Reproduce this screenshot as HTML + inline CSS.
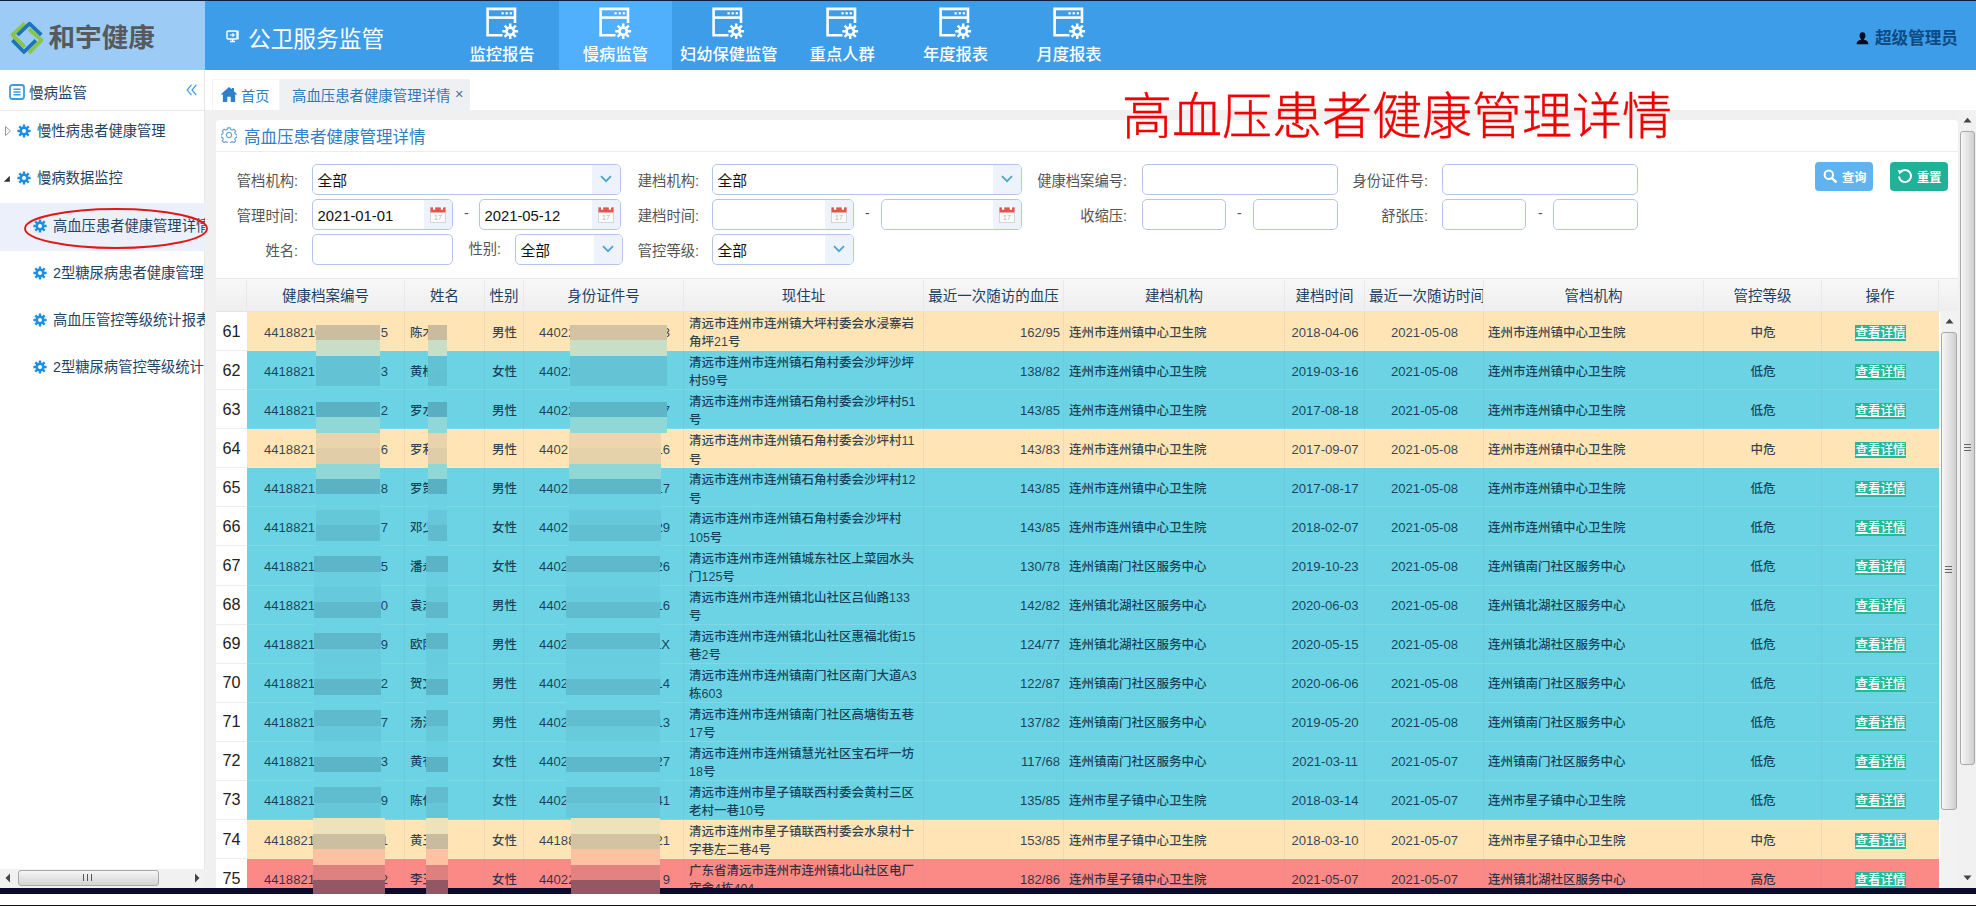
<!DOCTYPE html>
<html lang="zh-CN"><head><meta charset="utf-8"><title>高血压患者健康管理详情</title>
<style>
*{box-sizing:border-box;margin:0;padding:0}
html,body{width:1976px;height:906px;overflow:hidden;background:#fff}
body{font-family:"Liberation Sans","Noto Sans CJK SC",sans-serif;position:relative;color:#333}
.abs{position:absolute}
.t{position:absolute;white-space:nowrap;line-height:1}
#hdr{left:0;top:0;width:1976px;height:70.4px;background:#3e9de9}
#logo{left:0;top:0;width:205px;height:70.4px;background:#9ccbf5}
#topline{left:0;top:0;width:1976px;height:1px;background:#0c1f3c}
.nav{position:absolute;top:1px;height:69.4px;width:113px}
.nav.on{background:#50b0fd}
.nav .lb{position:absolute;left:0;width:113px;text-align:center;top:43.7px;font-size:16.3px;font-weight:500;color:#fff;line-height:18px;white-space:nowrap}
.nav svg{position:absolute;left:39px;top:4px}
#side{left:0;top:70.4px;width:205px;height:817.6px;background:#fff;border-right:1px solid #e4e6ea}
#main{left:205px;top:70.4px;width:1771px;height:817.6px;background:#f0f0f0}
#tabbar{left:205px;top:70.4px;width:1771px;height:39.9px;background:#fff}
#panel{left:216px;top:120.4px;width:1742px;height:790px;background:#fff;border-radius:4px 4px 0 0}
.inp{position:absolute;height:31px;background:#fff;border:1px solid #b3c6ea;border-radius:5px;overflow:hidden}
.inp .ic{position:absolute;right:0;top:0;width:28px;height:29px;background:#eef3fb}
.inp .v{position:absolute;left:4.5px;top:1.6px;line-height:29px;font-size:14.8px;color:#111;white-space:nowrap}
.lab{position:absolute;font-size:14.3px;color:#555;text-align:right;white-space:nowrap;line-height:31px;height:31px}
.dash{position:absolute;font-size:14px;color:#555;line-height:31px}
.th{position:absolute;top:280.3px;height:32px;line-height:32px;font-size:14.5px;color:#1c3f63;text-align:center;white-space:nowrap;overflow:hidden;border-right:1px solid #e9e9eb}
.row{position:absolute;left:247px;width:1692px}
.c{position:absolute;top:2px;font-size:12.5px;font-weight:500;color:rgba(0,24,52,0.80);white-space:nowrap;overflow:hidden}
.c.ctr{text-align:center}
.c.rt{text-align:right}
.c.d{font-size:13.1px;top:1px}
.addr{white-space:normal;line-height:18.2px}
.rn{position:absolute;left:216px;width:31px;text-align:center;font-size:16.2px;color:#222;padding-top:0}
.lk{position:relative;top:-0.7px;display:inline-block;background:#27b79b;color:#fff;text-decoration:underline;font-size:12.5px;line-height:16px;height:16px;vertical-align:middle}
.si{position:absolute;left:0;width:205px;height:47px}
.si .tx{position:absolute;top:0;line-height:47px;font-size:14.3px;color:#1f4466;white-space:nowrap}
</style></head>
<body>
<div class="abs" id="hdr"></div><div class="abs" id="logo"></div>
<svg class="abs" style="left:0;top:0" width="205" height="70" viewBox="0 0 205 70">
<g fill="none" stroke-width="3.7" stroke-linejoin="round" stroke-linecap="butt">
<polyline points="28.85,29.18 41.50,40.15 28.85,52.89" stroke="#8cc63f"/>
<polyline points="12.39,40.15 23.92,51.96 35.83,40.43" stroke="#1c75bc"/>
<polyline points="24.85,23.41 12.39,34.95 24.85,47.04" stroke="#8cc63f"/>
<polyline points="17.41,35.13 29.50,23.69 41.31,34.95" stroke="#1c75bc"/>
</g></svg>
<div class="t" style="left:48.5px;top:25px;font-size:26.6px;font-weight:bold;color:#565a5e;letter-spacing:0px">和宇健康</div>
<svg class="abs" style="left:226px;top:29px" width="15" height="14" viewBox="0 0 15 14"><g fill="none" stroke="#fff" stroke-width="1.4"><rect x="1" y="2" width="10" height="8" rx="1"/><path d="M12 1.5v9M4 12.5h5M6.5 10v2.5"/><path d="M4 6h4M6.5 4.3L8.2 6 6.5 7.7" stroke-width="1.1"/></g></svg>
<div class="t" style="left:248px;top:27.5px;font-size:22.7px;color:#fff">公卫服务监管</div>
<div class="nav" style="left:445.5px"><svg width="34" height="34" viewBox="0 0 34 34"><g fill="none" stroke="#fff" stroke-width="2.6"><path d="M17.5 30.3H2.6V3.9H30v14"/><path d="M2.6 12.6H30"/></g><g fill="#fff"><rect x="16.5" y="7.2" width="2.2" height="2.2"/><rect x="20.6" y="7.2" width="2.2" height="2.2"/><rect x="24.7" y="7.2" width="2.2" height="2.2"/></g><g transform="translate(25.2 26.3)"><g stroke="#fff" stroke-width="2.5"><path d="M0-7.9V7.9M-7.9 0H7.9M-5.6-5.6L5.6 5.6M-5.6 5.6L5.6-5.6"/></g><circle r="5" fill="#fff"/><circle r="2.3" fill="#3e9de9"/></g></svg><div class="lb">监控报告</div></div>
<div class="nav on" style="left:558.9px"><svg width="34" height="34" viewBox="0 0 34 34"><g fill="none" stroke="#fff" stroke-width="2.6"><path d="M17.5 30.3H2.6V3.9H30v14"/><path d="M2.6 12.6H30"/></g><g fill="#fff"><rect x="16.5" y="7.2" width="2.2" height="2.2"/><rect x="20.6" y="7.2" width="2.2" height="2.2"/><rect x="24.7" y="7.2" width="2.2" height="2.2"/></g><g transform="translate(25.2 26.3)"><g stroke="#fff" stroke-width="2.5"><path d="M0-7.9V7.9M-7.9 0H7.9M-5.6-5.6L5.6 5.6M-5.6 5.6L5.6-5.6"/></g><circle r="5" fill="#fff"/><circle r="2.3" fill="#50b0fd"/></g></svg><div class="lb">慢病监管</div></div>
<div class="nav" style="left:672.3px"><svg width="34" height="34" viewBox="0 0 34 34"><g fill="none" stroke="#fff" stroke-width="2.6"><path d="M17.5 30.3H2.6V3.9H30v14"/><path d="M2.6 12.6H30"/></g><g fill="#fff"><rect x="16.5" y="7.2" width="2.2" height="2.2"/><rect x="20.6" y="7.2" width="2.2" height="2.2"/><rect x="24.7" y="7.2" width="2.2" height="2.2"/></g><g transform="translate(25.2 26.3)"><g stroke="#fff" stroke-width="2.5"><path d="M0-7.9V7.9M-7.9 0H7.9M-5.6-5.6L5.6 5.6M-5.6 5.6L5.6-5.6"/></g><circle r="5" fill="#fff"/><circle r="2.3" fill="#3e9de9"/></g></svg><div class="lb">妇幼保健监管</div></div>
<div class="nav" style="left:785.7px"><svg width="34" height="34" viewBox="0 0 34 34"><g fill="none" stroke="#fff" stroke-width="2.6"><path d="M17.5 30.3H2.6V3.9H30v14"/><path d="M2.6 12.6H30"/></g><g fill="#fff"><rect x="16.5" y="7.2" width="2.2" height="2.2"/><rect x="20.6" y="7.2" width="2.2" height="2.2"/><rect x="24.7" y="7.2" width="2.2" height="2.2"/></g><g transform="translate(25.2 26.3)"><g stroke="#fff" stroke-width="2.5"><path d="M0-7.9V7.9M-7.9 0H7.9M-5.6-5.6L5.6 5.6M-5.6 5.6L5.6-5.6"/></g><circle r="5" fill="#fff"/><circle r="2.3" fill="#3e9de9"/></g></svg><div class="lb">重点人群</div></div>
<div class="nav" style="left:899.1px"><svg width="34" height="34" viewBox="0 0 34 34"><g fill="none" stroke="#fff" stroke-width="2.6"><path d="M17.5 30.3H2.6V3.9H30v14"/><path d="M2.6 12.6H30"/></g><g fill="#fff"><rect x="16.5" y="7.2" width="2.2" height="2.2"/><rect x="20.6" y="7.2" width="2.2" height="2.2"/><rect x="24.7" y="7.2" width="2.2" height="2.2"/></g><g transform="translate(25.2 26.3)"><g stroke="#fff" stroke-width="2.5"><path d="M0-7.9V7.9M-7.9 0H7.9M-5.6-5.6L5.6 5.6M-5.6 5.6L5.6-5.6"/></g><circle r="5" fill="#fff"/><circle r="2.3" fill="#3e9de9"/></g></svg><div class="lb">年度报表</div></div>
<div class="nav" style="left:1012.5px"><svg width="34" height="34" viewBox="0 0 34 34"><g fill="none" stroke="#fff" stroke-width="2.6"><path d="M17.5 30.3H2.6V3.9H30v14"/><path d="M2.6 12.6H30"/></g><g fill="#fff"><rect x="16.5" y="7.2" width="2.2" height="2.2"/><rect x="20.6" y="7.2" width="2.2" height="2.2"/><rect x="24.7" y="7.2" width="2.2" height="2.2"/></g><g transform="translate(25.2 26.3)"><g stroke="#fff" stroke-width="2.5"><path d="M0-7.9V7.9M-7.9 0H7.9M-5.6-5.6L5.6 5.6M-5.6 5.6L5.6-5.6"/></g><circle r="5" fill="#fff"/><circle r="2.3" fill="#3e9de9"/></g></svg><div class="lb">月度报表</div></div>
<svg class="abs" style="left:1856px;top:32px" width="13" height="13" viewBox="0 0 13 13"><g fill="#0b0d1e"><ellipse cx="6.500" cy="3.700" rx="2.900" ry="3.400"/><path d="M5 5.500h3v2.300c2.800.6 4.400 1.700 4.400 4.500H0.600c0-2.800 1.600-3.900 4.400-4.500z"/></g></svg>
<div class="t" style="left:1875px;top:31.2px;font-size:16.6px;font-weight:bold;color:#0c4a84">超级管理员</div>
<div class="abs" id="topline"></div>
<div class="abs" id="side"></div>
<div class="abs" id="main"></div>
<div class="abs" style="left:0;top:110px;width:205px;height:1px;background:#e6e8ec"></div>
<svg class="abs" style="left:9px;top:84px" width="16" height="16" viewBox="0 0 16 16"><rect x="1" y="1" width="14" height="14" rx="2.5" fill="#fff" stroke="#3a9be0" stroke-width="1.8"/><path d="M4.5 5.200h7M4.500 8h7M4.500 10.800h7" stroke="#3a9be0" stroke-width="1.500"/></svg>
<div class="t" style="left:29px;top:86px;font-size:14.5px;color:#1f4466">慢病监管</div>
<svg class="abs" style="left:186px;top:84px" width="12" height="12" viewBox="0 0 12 12"><path d="M5.500 0.800L1.200 6 5.500 11.200M10.300 0.800L6 6 10.300 11.200" fill="none" stroke="#4a9ee0" stroke-width="1.300"/></svg>
<div class="abs" style="left:0;top:203.4px;width:205px;height:47.2px;background:#ecf0fb"></div>
<div class="si" style="top:107.9px;overflow:hidden"><svg class="abs" style="left:4px;top:17px" width="8" height="12" viewBox="0 0 8 12"><path d="M1.500 1.500L6.500 6 1.500 10.500z" fill="#fff" stroke="#999" stroke-width="1"/></svg><div class="abs" style="left:17px;top:16px"><svg width="14" height="14" viewBox="-7 -7 14 14"><g stroke="#1e8fe0" stroke-width="2.4"><path d="M0-6.6V6.600M-6.600 0H6.600M-4.700-4.700L4.700 4.700M-4.700 4.700L4.700-4.700"/></g><circle r="4.500" fill="#1e8fe0"/><circle r="2" fill="#fff"/></svg></div><div class="tx" style="left:37px">慢性病患者健康管理</div></div>
<div class="si" style="top:155.2px;overflow:hidden"><svg class="abs" style="left:3px;top:20px" width="8" height="8" viewBox="0 0 8 8"><path d="M6.800 0.800V6.800H0.800z" fill="#333"/></svg><div class="abs" style="left:17px;top:16px"><svg width="14" height="14" viewBox="-7 -7 14 14"><g stroke="#1e8fe0" stroke-width="2.4"><path d="M0-6.6V6.600M-6.600 0H6.600M-4.700-4.700L4.700 4.700M-4.700 4.700L4.700-4.700"/></g><circle r="4.500" fill="#1e8fe0"/><circle r="2" fill="#fff"/></svg></div><div class="tx" style="left:37px">慢病数据监控</div></div>
<div class="si" style="top:202.5px;overflow:hidden"><div class="abs" style="left:33px;top:16px"><svg width="14" height="14" viewBox="-7 -7 14 14"><g stroke="#1e8fe0" stroke-width="2.4"><path d="M0-6.6V6.600M-6.600 0H6.600M-4.700-4.700L4.700 4.700M-4.700 4.700L4.700-4.700"/></g><circle r="4.500" fill="#1e8fe0"/><circle r="2" fill="#fff"/></svg></div><div class="tx" style="left:53px">高血压患者健康管理详情</div></div>
<div class="si" style="top:249.79999999999995px;overflow:hidden"><div class="abs" style="left:33px;top:16px"><svg width="14" height="14" viewBox="-7 -7 14 14"><g stroke="#1e8fe0" stroke-width="2.4"><path d="M0-6.6V6.600M-6.600 0H6.600M-4.700-4.700L4.700 4.700M-4.700 4.700L4.700-4.700"/></g><circle r="4.500" fill="#1e8fe0"/><circle r="2" fill="#fff"/></svg></div><div class="tx" style="left:53px">2型糖尿病患者健康管理</div></div>
<div class="si" style="top:297.1px;overflow:hidden"><div class="abs" style="left:33px;top:16px"><svg width="14" height="14" viewBox="-7 -7 14 14"><g stroke="#1e8fe0" stroke-width="2.4"><path d="M0-6.6V6.600M-6.600 0H6.600M-4.700-4.700L4.700 4.700M-4.700 4.700L4.700-4.700"/></g><circle r="4.500" fill="#1e8fe0"/><circle r="2" fill="#fff"/></svg></div><div class="tx" style="left:53px">高血压管控等级统计报表</div></div>
<div class="si" style="top:344.4px;overflow:hidden"><div class="abs" style="left:33px;top:16px"><svg width="14" height="14" viewBox="-7 -7 14 14"><g stroke="#1e8fe0" stroke-width="2.4"><path d="M0-6.6V6.600M-6.600 0H6.600M-4.700-4.700L4.700 4.700M-4.700 4.700L4.700-4.700"/></g><circle r="4.500" fill="#1e8fe0"/><circle r="2" fill="#fff"/></svg></div><div class="tx" style="left:53px">2型糖尿病管控等级统计</div></div>
<svg class="abs" style="left:20px;top:204px" width="195" height="50" viewBox="0 0 195 50"><ellipse cx="96" cy="24.500" rx="91" ry="19.500" fill="none" stroke="#e01818" stroke-width="1.900"/></svg>
<div class="abs" style="left:0;top:869px;width:205px;height:19px;background:#f1f1f1"></div>
<div class="abs" style="left:18px;top:870px;width:141px;height:16px;border:1px solid #a8a8a8;border-radius:3px;background:linear-gradient(#f6f6f6,#e6e6e6 45%,#d4d4d4)"></div>
<svg class="abs" style="left:5px;top:873px" width="6" height="10" viewBox="0 0 6 10"><path d="M5 0.500V9.500L0.500 5z" fill="#444"/></svg>
<svg class="abs" style="left:194px;top:873px" width="6" height="10" viewBox="0 0 6 10"><path d="M1 0.500V9.500L5.500 5z" fill="#444"/></svg>
<div class="abs" style="left:83px;top:874px;width:1px;height:7px;background:#555"></div><div class="abs" style="left:87px;top:874px;width:1px;height:7px;background:#555"></div><div class="abs" style="left:91px;top:874px;width:1px;height:7px;background:#555"></div>
<div class="abs" id="tabbar"></div>
<div class="abs" style="left:280px;top:79px;width:190px;height:31.3px;background:#eff0f3"></div>
<div class="abs" style="left:212px;top:79px;width:68px;height:31.3px;border:1px solid #f3f4f6;border-bottom:none"></div>
<svg class="abs" style="left:219.500px;top:85.500px" width="18" height="17" viewBox="0 0 17 16"><path d="M8.500 0.800L0.500 8h2.200v7.200h4.200v-5h3.200v5h4.200V8h2.200L13.200 4.900V1.800h-2v1.300z" fill="#2f80c8"/></svg>
<div class="t" style="left:241px;top:88.5px;font-size:14.2px;color:#2f80c8">首页</div>
<div class="t" style="left:292px;top:88.5px;font-size:14.4px;color:#2f78b8">高血压患者健康管理详情</div>
<div class="t" style="left:455px;top:87.3px;font-size:14.5px;color:#4a6f95">×</div>
<div class="abs" id="panel"></div>
<div class="abs" style="left:216px;top:151px;width:1742px;height:1px;background:#ececec"></div>
<svg class="abs" style="left:221px;top:127px" width="16" height="16" viewBox="-8 -8 16 16"><g fill="none" stroke="#6aa6dc" stroke-width="1.200"><path d="M-1.300-7.200h2.600l.5 1.700 1.500.6 1.600-.900 1.800 1.800-.9 1.600.6 1.500 1.700.5v2.600l-1.700.5-.6 1.500.9 1.600-1.800 1.800-1.600-.9-1.500.6-.5 1.700h-2.600l-.5-1.700-1.500-.6-1.600.9-1.800-1.800.9-1.600-.6-1.500-1.700-.5v-2.600l1.700-.5.6-1.500-.9-1.600 1.800-1.800 1.600.9 1.500-.6z"/><circle r="2.600"/></g></svg>
<div class="t" style="left:244px;top:129px;font-size:16.5px;color:#2f80c8">高血压患者健康管理详情</div>
<div class="lab" style="left:148px;width:150px;top:166.2px">管档机构:</div>
<div class="inp" style="left:312px;top:164px;width:309px"><div class="v">全部</div><div class="ic"><svg class="abs" style="left:8px;top:10px" width="12" height="8" viewBox="0 0 12 8"><path d="M1 1.200L6 6.200 11 1.200" fill="none" stroke="#47a4d6" stroke-width="1.700"/></svg></div></div>
<div class="lab" style="left:549px;width:150px;top:166.2px">建档机构:</div>
<div class="inp" style="left:712px;top:164px;width:310px"><div class="v">全部</div><div class="ic"><svg class="abs" style="left:8px;top:10px" width="12" height="8" viewBox="0 0 12 8"><path d="M1 1.200L6 6.200 11 1.200" fill="none" stroke="#47a4d6" stroke-width="1.700"/></svg></div></div>
<div class="lab" style="left:977px;width:150px;top:166.2px">健康档案编号:</div>
<div class="inp" style="left:1142px;top:164px;width:196px"></div>
<div class="lab" style="left:1278px;width:150px;top:166.2px">身份证件号:</div>
<div class="inp" style="left:1442px;top:164px;width:196px"></div>
<div class="lab" style="left:148px;width:150px;top:201.2px">管理时间:</div>
<div class="inp" style="left:312px;top:199px;width:141px"><div class="v">2021-01-01</div><div class="ic"><svg class="abs" style="left:6px;top:6px" width="16" height="17" viewBox="0 0 16 17"><rect x="0.500" y="1.500" width="15" height="15" fill="#fbfbfb" stroke="#d8d4d0" stroke-width="1"/><rect x="0.500" y="1.500" width="15" height="5" fill="#e2574c"/><rect x="3" y="0.500" width="2.200" height="3.200" fill="#fff"/><rect x="10.800" y="0.500" width="2.200" height="3.200" fill="#fff"/><text x="8" y="14" font-size="7" text-anchor="middle" fill="#b8b4b0" font-family="Liberation Sans, sans-serif">17</text></svg></div></div>
<div class="dash" style="left:464px;top:198px">-</div>
<div class="inp" style="left:479px;top:199px;width:142px"><div class="v">2021-05-12</div><div class="ic"><svg class="abs" style="left:6px;top:6px" width="16" height="17" viewBox="0 0 16 17"><rect x="0.500" y="1.500" width="15" height="15" fill="#fbfbfb" stroke="#d8d4d0" stroke-width="1"/><rect x="0.500" y="1.500" width="15" height="5" fill="#e2574c"/><rect x="3" y="0.500" width="2.200" height="3.200" fill="#fff"/><rect x="10.800" y="0.500" width="2.200" height="3.200" fill="#fff"/><text x="8" y="14" font-size="7" text-anchor="middle" fill="#b8b4b0" font-family="Liberation Sans, sans-serif">17</text></svg></div></div>
<div class="lab" style="left:549px;width:150px;top:201.2px">建档时间:</div>
<div class="inp" style="left:712px;top:199px;width:142px"><div class="ic"><svg class="abs" style="left:6px;top:6px" width="16" height="17" viewBox="0 0 16 17"><rect x="0.500" y="1.500" width="15" height="15" fill="#fbfbfb" stroke="#d8d4d0" stroke-width="1"/><rect x="0.500" y="1.500" width="15" height="5" fill="#e2574c"/><rect x="3" y="0.500" width="2.200" height="3.200" fill="#fff"/><rect x="10.800" y="0.500" width="2.200" height="3.200" fill="#fff"/><text x="8" y="14" font-size="7" text-anchor="middle" fill="#b8b4b0" font-family="Liberation Sans, sans-serif">17</text></svg></div></div>
<div class="dash" style="left:865px;top:198px">-</div>
<div class="inp" style="left:881px;top:199px;width:141px"><div class="ic"><svg class="abs" style="left:6px;top:6px" width="16" height="17" viewBox="0 0 16 17"><rect x="0.500" y="1.500" width="15" height="15" fill="#fbfbfb" stroke="#d8d4d0" stroke-width="1"/><rect x="0.500" y="1.500" width="15" height="5" fill="#e2574c"/><rect x="3" y="0.500" width="2.200" height="3.200" fill="#fff"/><rect x="10.800" y="0.500" width="2.200" height="3.200" fill="#fff"/><text x="8" y="14" font-size="7" text-anchor="middle" fill="#b8b4b0" font-family="Liberation Sans, sans-serif">17</text></svg></div></div>
<div class="lab" style="left:977px;width:150px;top:201.2px">收缩压:</div>
<div class="inp" style="left:1142px;top:199px;width:84px"></div>
<div class="dash" style="left:1237px;top:198px">-</div>
<div class="inp" style="left:1253px;top:199px;width:85px"></div>
<div class="lab" style="left:1278px;width:150px;top:201.2px">舒张压:</div>
<div class="inp" style="left:1442px;top:199px;width:84px"></div>
<div class="dash" style="left:1538px;top:198px">-</div>
<div class="inp" style="left:1553px;top:199px;width:85px"></div>
<div class="lab" style="left:148px;width:150px;top:236.2px">姓名:</div>
<div class="inp" style="left:312px;top:234px;width:141px"></div>
<div class="lab" style="left:351px;width:150px;top:233.89999999999998px">性别:</div>
<div class="inp" style="left:515px;top:234px;width:108px"><div class="v">全部</div><div class="ic"><svg class="abs" style="left:8px;top:10px" width="12" height="8" viewBox="0 0 12 8"><path d="M1 1.200L6 6.200 11 1.200" fill="none" stroke="#47a4d6" stroke-width="1.700"/></svg></div></div>
<div class="lab" style="left:549px;width:150px;top:236.2px">管控等级:</div>
<div class="inp" style="left:712px;top:234px;width:142px"><div class="v">全部</div><div class="ic"><svg class="abs" style="left:8px;top:10px" width="12" height="8" viewBox="0 0 12 8"><path d="M1 1.200L6 6.200 11 1.200" fill="none" stroke="#47a4d6" stroke-width="1.700"/></svg></div></div>
<div class="abs" style="left:1815px;top:162px;width:58px;height:29px;background:#5fb3ef;border-radius:4px"></div>
<svg class="abs" style="left:1823px;top:169px" width="15" height="15" viewBox="0 0 15 15"><circle cx="5.800" cy="5.800" r="4.200" fill="none" stroke="#fff" stroke-width="2"/><path d="M8.800 8.800L13.500 13.500" stroke="#fff" stroke-width="2.400"/></svg>
<div class="t" style="left:1842px;top:171.8px;font-size:12.2px;font-weight:bold;color:#fff">查询</div>
<div class="abs" style="left:1890px;top:162px;width:58px;height:29px;background:#20b299;border-radius:4px"></div>
<svg class="abs" style="left:1897px;top:168px" width="16" height="16" viewBox="0 0 16 16"><path d="M3.300 4.200A6 6 0 1 1 2 8.500" fill="none" stroke="#fff" stroke-width="2"/><path d="M0.800 1.800L5.600 3.200 2.400 6.600z" fill="#fff"/></svg>
<div class="t" style="left:1917px;top:171.8px;font-size:12.2px;font-weight:bold;color:#fff">重置</div>
<div class="abs" style="left:216px;top:278px;width:1742px;height:34px;background:linear-gradient(#f8f8f8,#eeeeef);border-top:1px solid #e6e6e8;border-bottom:1px solid #e6e4e6"></div>
<div class="th" style="left:216px;width:31px"></div>
<div class="th" style="left:247px;width:158px">健康档案编号</div>
<div class="th" style="left:405px;width:80px">姓名</div>
<div class="th" style="left:485px;width:39px">性别</div>
<div class="th" style="left:524px;width:160px">身份证件号</div>
<div class="th" style="left:684px;width:240px">现住址</div>
<div class="th" style="left:924px;width:140px">最近一次随访的血压</div>
<div class="th" style="left:1064px;width:221px">建档机构</div>
<div class="th" style="left:1285px;width:80px">建档时间</div>
<div class="th" style="left:1365px;width:119px;text-align:left;padding-left:4px">最近一次随访时间</div>
<div class="th" style="left:1484px;width:220px">管档机构</div>
<div class="th" style="left:1704px;width:118px">管控等级</div>
<div class="th" style="left:1822px;width:117px">操作</div>
<div class="rn" style="top:311.50px;height:39.08px;line-height:39.08px">61</div>
<div class="row" style="top:311.50px;height:39.38px;background:#ffe4b5"><div class="c d" style="left:17px;width:66px;line-height:39.08px;height:39.08px">44188210</div><div class="c rt d" style="left:93px;width:48px;line-height:39.08px;height:39.08px">5</div><div class="c " style="left:163px;width:75px;line-height:39.08px;height:39.08px">陈木</div><div class="c ctr" style="left:238px;width:39px;line-height:39.08px;height:39.08px">男性</div><div class="c d" style="left:292px;width:61px;line-height:39.08px;height:39.08px">44022</div><div class="c rt d" style="left:373px;width:50px;line-height:39.08px;height:39.08px">3</div><div class="c addr" style="left:442px;width:232px;top:3.6px;height:35.48px">清远市连州市连州镇大坪村委会水浸寨岩角坪21号</div><div class="c rt d" style="left:677px;width:136px;line-height:39.08px;height:39.08px">162/95</div><div class="c " style="left:822px;width:216px;line-height:39.08px;height:39.08px">连州市连州镇中心卫生院</div><div class="c ctr d" style="left:1038px;width:80px;line-height:39.08px;height:39.08px">2018-04-06</div><div class="c ctr d" style="left:1118px;width:119px;line-height:39.08px;height:39.08px">2021-05-08</div><div class="c " style="left:1241px;width:216px;line-height:39.08px;height:39.08px">连州市连州镇中心卫生院</div><div class="c ctr" style="left:1457px;width:118px;line-height:39.08px;height:39.08px">中危</div><div class="c ctr" style="left:1575px;width:117px;line-height:39.08px;height:39.08px"><span class="lk">查看详情</span></div></div>
<div class="rn" style="top:350.58px;height:39.08px;line-height:39.08px">62</div>
<div class="row" style="top:350.58px;height:39.38px;background:#6bd3e4"><div class="c d" style="left:17px;width:66px;line-height:39.08px;height:39.08px">4418821</div><div class="c rt d" style="left:93px;width:48px;line-height:39.08px;height:39.08px">3</div><div class="c " style="left:163px;width:75px;line-height:39.08px;height:39.08px">黄柏</div><div class="c ctr" style="left:238px;width:39px;line-height:39.08px;height:39.08px">女性</div><div class="c d" style="left:292px;width:61px;line-height:39.08px;height:39.08px">44022</div><div class="c rt d" style="left:373px;width:50px;line-height:39.08px;height:39.08px"></div><div class="c addr" style="left:442px;width:232px;top:3.6px;height:35.48px">清远市连州市连州镇石角村委会沙坪沙坪村59号</div><div class="c rt d" style="left:677px;width:136px;line-height:39.08px;height:39.08px">138/82</div><div class="c " style="left:822px;width:216px;line-height:39.08px;height:39.08px">连州市连州镇中心卫生院</div><div class="c ctr d" style="left:1038px;width:80px;line-height:39.08px;height:39.08px">2019-03-16</div><div class="c ctr d" style="left:1118px;width:119px;line-height:39.08px;height:39.08px">2021-05-08</div><div class="c " style="left:1241px;width:216px;line-height:39.08px;height:39.08px">连州市连州镇中心卫生院</div><div class="c ctr" style="left:1457px;width:118px;line-height:39.08px;height:39.08px">低危</div><div class="c ctr" style="left:1575px;width:117px;line-height:39.08px;height:39.08px"><span class="lk">查看详情</span></div></div>
<div class="rn" style="top:389.66px;height:39.08px;line-height:39.08px">63</div>
<div class="row" style="top:389.66px;height:39.38px;background:#6bd3e4"><div class="c d" style="left:17px;width:66px;line-height:39.08px;height:39.08px">4418821</div><div class="c rt d" style="left:93px;width:48px;line-height:39.08px;height:39.08px">2</div><div class="c " style="left:163px;width:75px;line-height:39.08px;height:39.08px">罗水</div><div class="c ctr" style="left:238px;width:39px;line-height:39.08px;height:39.08px">男性</div><div class="c d" style="left:292px;width:61px;line-height:39.08px;height:39.08px">44022</div><div class="c rt d" style="left:373px;width:50px;line-height:39.08px;height:39.08px">7</div><div class="c addr" style="left:442px;width:232px;top:3.6px;height:35.48px">清远市连州市连州镇石角村委会沙坪村51号</div><div class="c rt d" style="left:677px;width:136px;line-height:39.08px;height:39.08px">143/85</div><div class="c " style="left:822px;width:216px;line-height:39.08px;height:39.08px">连州市连州镇中心卫生院</div><div class="c ctr d" style="left:1038px;width:80px;line-height:39.08px;height:39.08px">2017-08-18</div><div class="c ctr d" style="left:1118px;width:119px;line-height:39.08px;height:39.08px">2021-05-08</div><div class="c " style="left:1241px;width:216px;line-height:39.08px;height:39.08px">连州市连州镇中心卫生院</div><div class="c ctr" style="left:1457px;width:118px;line-height:39.08px;height:39.08px">低危</div><div class="c ctr" style="left:1575px;width:117px;line-height:39.08px;height:39.08px"><span class="lk">查看详情</span></div></div>
<div class="rn" style="top:428.74px;height:39.08px;line-height:39.08px">64</div>
<div class="row" style="top:428.74px;height:39.38px;background:#ffe4b5"><div class="c d" style="left:17px;width:66px;line-height:39.08px;height:39.08px">4418821</div><div class="c rt d" style="left:93px;width:48px;line-height:39.08px;height:39.08px">6</div><div class="c " style="left:163px;width:75px;line-height:39.08px;height:39.08px">罗利</div><div class="c ctr" style="left:238px;width:39px;line-height:39.08px;height:39.08px">男性</div><div class="c d" style="left:292px;width:61px;line-height:39.08px;height:39.08px">4402</div><div class="c rt d" style="left:373px;width:50px;line-height:39.08px;height:39.08px">16</div><div class="c addr" style="left:442px;width:232px;top:3.6px;height:35.48px">清远市连州市连州镇石角村委会沙坪村11号</div><div class="c rt d" style="left:677px;width:136px;line-height:39.08px;height:39.08px">143/83</div><div class="c " style="left:822px;width:216px;line-height:39.08px;height:39.08px">连州市连州镇中心卫生院</div><div class="c ctr d" style="left:1038px;width:80px;line-height:39.08px;height:39.08px">2017-09-07</div><div class="c ctr d" style="left:1118px;width:119px;line-height:39.08px;height:39.08px">2021-05-08</div><div class="c " style="left:1241px;width:216px;line-height:39.08px;height:39.08px">连州市连州镇中心卫生院</div><div class="c ctr" style="left:1457px;width:118px;line-height:39.08px;height:39.08px">中危</div><div class="c ctr" style="left:1575px;width:117px;line-height:39.08px;height:39.08px"><span class="lk">查看详情</span></div></div>
<div class="rn" style="top:467.82px;height:39.08px;line-height:39.08px">65</div>
<div class="row" style="top:467.82px;height:39.38px;background:#6bd3e4"><div class="c d" style="left:17px;width:66px;line-height:39.08px;height:39.08px">4418821</div><div class="c rt d" style="left:93px;width:48px;line-height:39.08px;height:39.08px">8</div><div class="c " style="left:163px;width:75px;line-height:39.08px;height:39.08px">罗策</div><div class="c ctr" style="left:238px;width:39px;line-height:39.08px;height:39.08px">男性</div><div class="c d" style="left:292px;width:61px;line-height:39.08px;height:39.08px">4402</div><div class="c rt d" style="left:373px;width:50px;line-height:39.08px;height:39.08px">17</div><div class="c addr" style="left:442px;width:232px;top:3.6px;height:35.48px">清远市连州市连州镇石角村委会沙坪村12号</div><div class="c rt d" style="left:677px;width:136px;line-height:39.08px;height:39.08px">143/85</div><div class="c " style="left:822px;width:216px;line-height:39.08px;height:39.08px">连州市连州镇中心卫生院</div><div class="c ctr d" style="left:1038px;width:80px;line-height:39.08px;height:39.08px">2017-08-17</div><div class="c ctr d" style="left:1118px;width:119px;line-height:39.08px;height:39.08px">2021-05-08</div><div class="c " style="left:1241px;width:216px;line-height:39.08px;height:39.08px">连州市连州镇中心卫生院</div><div class="c ctr" style="left:1457px;width:118px;line-height:39.08px;height:39.08px">低危</div><div class="c ctr" style="left:1575px;width:117px;line-height:39.08px;height:39.08px"><span class="lk">查看详情</span></div></div>
<div class="rn" style="top:506.90px;height:39.08px;line-height:39.08px">66</div>
<div class="row" style="top:506.90px;height:39.38px;background:#6bd3e4"><div class="c d" style="left:17px;width:66px;line-height:39.08px;height:39.08px">4418821</div><div class="c rt d" style="left:93px;width:48px;line-height:39.08px;height:39.08px">7</div><div class="c " style="left:163px;width:75px;line-height:39.08px;height:39.08px">邓少</div><div class="c ctr" style="left:238px;width:39px;line-height:39.08px;height:39.08px">女性</div><div class="c d" style="left:292px;width:61px;line-height:39.08px;height:39.08px">4402</div><div class="c rt d" style="left:373px;width:50px;line-height:39.08px;height:39.08px">29</div><div class="c addr" style="left:442px;width:232px;top:3.6px;height:35.48px">清远市连州市连州镇石角村委会沙坪村105号</div><div class="c rt d" style="left:677px;width:136px;line-height:39.08px;height:39.08px">143/85</div><div class="c " style="left:822px;width:216px;line-height:39.08px;height:39.08px">连州市连州镇中心卫生院</div><div class="c ctr d" style="left:1038px;width:80px;line-height:39.08px;height:39.08px">2018-02-07</div><div class="c ctr d" style="left:1118px;width:119px;line-height:39.08px;height:39.08px">2021-05-08</div><div class="c " style="left:1241px;width:216px;line-height:39.08px;height:39.08px">连州市连州镇中心卫生院</div><div class="c ctr" style="left:1457px;width:118px;line-height:39.08px;height:39.08px">低危</div><div class="c ctr" style="left:1575px;width:117px;line-height:39.08px;height:39.08px"><span class="lk">查看详情</span></div></div>
<div class="rn" style="top:545.98px;height:39.08px;line-height:39.08px">67</div>
<div class="row" style="top:545.98px;height:39.38px;background:#6bd3e4"><div class="c d" style="left:17px;width:66px;line-height:39.08px;height:39.08px">4418821</div><div class="c rt d" style="left:93px;width:48px;line-height:39.08px;height:39.08px">5</div><div class="c " style="left:163px;width:75px;line-height:39.08px;height:39.08px">潘永</div><div class="c ctr" style="left:238px;width:39px;line-height:39.08px;height:39.08px">女性</div><div class="c d" style="left:292px;width:61px;line-height:39.08px;height:39.08px">4402</div><div class="c rt d" style="left:373px;width:50px;line-height:39.08px;height:39.08px">26</div><div class="c addr" style="left:442px;width:232px;top:3.6px;height:35.48px">清远市连州市连州镇城东社区上菜园水头门125号</div><div class="c rt d" style="left:677px;width:136px;line-height:39.08px;height:39.08px">130/78</div><div class="c " style="left:822px;width:216px;line-height:39.08px;height:39.08px">连州镇南门社区服务中心</div><div class="c ctr d" style="left:1038px;width:80px;line-height:39.08px;height:39.08px">2019-10-23</div><div class="c ctr d" style="left:1118px;width:119px;line-height:39.08px;height:39.08px">2021-05-08</div><div class="c " style="left:1241px;width:216px;line-height:39.08px;height:39.08px">连州镇南门社区服务中心</div><div class="c ctr" style="left:1457px;width:118px;line-height:39.08px;height:39.08px">低危</div><div class="c ctr" style="left:1575px;width:117px;line-height:39.08px;height:39.08px"><span class="lk">查看详情</span></div></div>
<div class="rn" style="top:585.06px;height:39.08px;line-height:39.08px">68</div>
<div class="row" style="top:585.06px;height:39.38px;background:#6bd3e4"><div class="c d" style="left:17px;width:66px;line-height:39.08px;height:39.08px">4418821</div><div class="c rt d" style="left:93px;width:48px;line-height:39.08px;height:39.08px">50</div><div class="c " style="left:163px;width:75px;line-height:39.08px;height:39.08px">袁志</div><div class="c ctr" style="left:238px;width:39px;line-height:39.08px;height:39.08px">男性</div><div class="c d" style="left:292px;width:61px;line-height:39.08px;height:39.08px">4402</div><div class="c rt d" style="left:373px;width:50px;line-height:39.08px;height:39.08px">16</div><div class="c addr" style="left:442px;width:232px;top:3.6px;height:35.48px">清远市连州市连州镇北山社区吕仙路133号</div><div class="c rt d" style="left:677px;width:136px;line-height:39.08px;height:39.08px">142/82</div><div class="c " style="left:822px;width:216px;line-height:39.08px;height:39.08px">连州镇北湖社区服务中心</div><div class="c ctr d" style="left:1038px;width:80px;line-height:39.08px;height:39.08px">2020-06-03</div><div class="c ctr d" style="left:1118px;width:119px;line-height:39.08px;height:39.08px">2021-05-08</div><div class="c " style="left:1241px;width:216px;line-height:39.08px;height:39.08px">连州镇北湖社区服务中心</div><div class="c ctr" style="left:1457px;width:118px;line-height:39.08px;height:39.08px">低危</div><div class="c ctr" style="left:1575px;width:117px;line-height:39.08px;height:39.08px"><span class="lk">查看详情</span></div></div>
<div class="rn" style="top:624.14px;height:39.08px;line-height:39.08px">69</div>
<div class="row" style="top:624.14px;height:39.38px;background:#6bd3e4"><div class="c d" style="left:17px;width:66px;line-height:39.08px;height:39.08px">4418821</div><div class="c rt d" style="left:93px;width:48px;line-height:39.08px;height:39.08px">9</div><div class="c " style="left:163px;width:75px;line-height:39.08px;height:39.08px">欧阳</div><div class="c ctr" style="left:238px;width:39px;line-height:39.08px;height:39.08px">男性</div><div class="c d" style="left:292px;width:61px;line-height:39.08px;height:39.08px">4402</div><div class="c rt d" style="left:373px;width:50px;line-height:39.08px;height:39.08px">1X</div><div class="c addr" style="left:442px;width:232px;top:3.6px;height:35.48px">清远市连州市连州镇北山社区惠福北街15巷2号</div><div class="c rt d" style="left:677px;width:136px;line-height:39.08px;height:39.08px">124/77</div><div class="c " style="left:822px;width:216px;line-height:39.08px;height:39.08px">连州镇北湖社区服务中心</div><div class="c ctr d" style="left:1038px;width:80px;line-height:39.08px;height:39.08px">2020-05-15</div><div class="c ctr d" style="left:1118px;width:119px;line-height:39.08px;height:39.08px">2021-05-08</div><div class="c " style="left:1241px;width:216px;line-height:39.08px;height:39.08px">连州镇北湖社区服务中心</div><div class="c ctr" style="left:1457px;width:118px;line-height:39.08px;height:39.08px">低危</div><div class="c ctr" style="left:1575px;width:117px;line-height:39.08px;height:39.08px"><span class="lk">查看详情</span></div></div>
<div class="rn" style="top:663.22px;height:39.08px;line-height:39.08px">70</div>
<div class="row" style="top:663.22px;height:39.38px;background:#6bd3e4"><div class="c d" style="left:17px;width:66px;line-height:39.08px;height:39.08px">4418821</div><div class="c rt d" style="left:93px;width:48px;line-height:39.08px;height:39.08px">2</div><div class="c " style="left:163px;width:75px;line-height:39.08px;height:39.08px">贺文</div><div class="c ctr" style="left:238px;width:39px;line-height:39.08px;height:39.08px">男性</div><div class="c d" style="left:292px;width:61px;line-height:39.08px;height:39.08px">4402</div><div class="c rt d" style="left:373px;width:50px;line-height:39.08px;height:39.08px">14</div><div class="c addr" style="left:442px;width:232px;top:3.6px;height:35.48px">清远市连州市连州镇南门社区南门大道A3栋603</div><div class="c rt d" style="left:677px;width:136px;line-height:39.08px;height:39.08px">122/87</div><div class="c " style="left:822px;width:216px;line-height:39.08px;height:39.08px">连州镇南门社区服务中心</div><div class="c ctr d" style="left:1038px;width:80px;line-height:39.08px;height:39.08px">2020-06-06</div><div class="c ctr d" style="left:1118px;width:119px;line-height:39.08px;height:39.08px">2021-05-08</div><div class="c " style="left:1241px;width:216px;line-height:39.08px;height:39.08px">连州镇南门社区服务中心</div><div class="c ctr" style="left:1457px;width:118px;line-height:39.08px;height:39.08px">低危</div><div class="c ctr" style="left:1575px;width:117px;line-height:39.08px;height:39.08px"><span class="lk">查看详情</span></div></div>
<div class="rn" style="top:702.30px;height:39.08px;line-height:39.08px">71</div>
<div class="row" style="top:702.30px;height:39.38px;background:#6bd3e4"><div class="c d" style="left:17px;width:66px;line-height:39.08px;height:39.08px">4418821</div><div class="c rt d" style="left:93px;width:48px;line-height:39.08px;height:39.08px">7</div><div class="c " style="left:163px;width:75px;line-height:39.08px;height:39.08px">汤汉</div><div class="c ctr" style="left:238px;width:39px;line-height:39.08px;height:39.08px">男性</div><div class="c d" style="left:292px;width:61px;line-height:39.08px;height:39.08px">4402</div><div class="c rt d" style="left:373px;width:50px;line-height:39.08px;height:39.08px">13</div><div class="c addr" style="left:442px;width:232px;top:3.6px;height:35.48px">清远市连州市连州镇南门社区高塘街五巷17号</div><div class="c rt d" style="left:677px;width:136px;line-height:39.08px;height:39.08px">137/82</div><div class="c " style="left:822px;width:216px;line-height:39.08px;height:39.08px">连州镇南门社区服务中心</div><div class="c ctr d" style="left:1038px;width:80px;line-height:39.08px;height:39.08px">2019-05-20</div><div class="c ctr d" style="left:1118px;width:119px;line-height:39.08px;height:39.08px">2021-05-08</div><div class="c " style="left:1241px;width:216px;line-height:39.08px;height:39.08px">连州镇南门社区服务中心</div><div class="c ctr" style="left:1457px;width:118px;line-height:39.08px;height:39.08px">低危</div><div class="c ctr" style="left:1575px;width:117px;line-height:39.08px;height:39.08px"><span class="lk">查看详情</span></div></div>
<div class="rn" style="top:741.38px;height:39.08px;line-height:39.08px">72</div>
<div class="row" style="top:741.38px;height:39.38px;background:#6bd3e4"><div class="c d" style="left:17px;width:66px;line-height:39.08px;height:39.08px">4418821</div><div class="c rt d" style="left:93px;width:48px;line-height:39.08px;height:39.08px">3</div><div class="c " style="left:163px;width:75px;line-height:39.08px;height:39.08px">黄有</div><div class="c ctr" style="left:238px;width:39px;line-height:39.08px;height:39.08px">女性</div><div class="c d" style="left:292px;width:61px;line-height:39.08px;height:39.08px">4402</div><div class="c rt d" style="left:373px;width:50px;line-height:39.08px;height:39.08px">27</div><div class="c addr" style="left:442px;width:232px;top:3.6px;height:35.48px">清远市连州市连州镇慧光社区宝石坪一坊18号</div><div class="c rt d" style="left:677px;width:136px;line-height:39.08px;height:39.08px">117/68</div><div class="c " style="left:822px;width:216px;line-height:39.08px;height:39.08px">连州镇南门社区服务中心</div><div class="c ctr d" style="left:1038px;width:80px;line-height:39.08px;height:39.08px">2021-03-11</div><div class="c ctr d" style="left:1118px;width:119px;line-height:39.08px;height:39.08px">2021-05-07</div><div class="c " style="left:1241px;width:216px;line-height:39.08px;height:39.08px">连州镇南门社区服务中心</div><div class="c ctr" style="left:1457px;width:118px;line-height:39.08px;height:39.08px">低危</div><div class="c ctr" style="left:1575px;width:117px;line-height:39.08px;height:39.08px"><span class="lk">查看详情</span></div></div>
<div class="rn" style="top:780.46px;height:39.08px;line-height:39.08px">73</div>
<div class="row" style="top:780.46px;height:39.38px;background:#6bd3e4"><div class="c d" style="left:17px;width:66px;line-height:39.08px;height:39.08px">4418821</div><div class="c rt d" style="left:93px;width:48px;line-height:39.08px;height:39.08px">9</div><div class="c " style="left:163px;width:75px;line-height:39.08px;height:39.08px">陈仕</div><div class="c ctr" style="left:238px;width:39px;line-height:39.08px;height:39.08px">女性</div><div class="c d" style="left:292px;width:61px;line-height:39.08px;height:39.08px">4402</div><div class="c rt d" style="left:373px;width:50px;line-height:39.08px;height:39.08px">41</div><div class="c addr" style="left:442px;width:232px;top:3.6px;height:35.48px">清远市连州市星子镇联西村委会黄村三区老村一巷10号</div><div class="c rt d" style="left:677px;width:136px;line-height:39.08px;height:39.08px">135/85</div><div class="c " style="left:822px;width:216px;line-height:39.08px;height:39.08px">连州市星子镇中心卫生院</div><div class="c ctr d" style="left:1038px;width:80px;line-height:39.08px;height:39.08px">2018-03-14</div><div class="c ctr d" style="left:1118px;width:119px;line-height:39.08px;height:39.08px">2021-05-07</div><div class="c " style="left:1241px;width:216px;line-height:39.08px;height:39.08px">连州市星子镇中心卫生院</div><div class="c ctr" style="left:1457px;width:118px;line-height:39.08px;height:39.08px">低危</div><div class="c ctr" style="left:1575px;width:117px;line-height:39.08px;height:39.08px"><span class="lk">查看详情</span></div></div>
<div class="rn" style="top:819.54px;height:39.08px;line-height:39.08px">74</div>
<div class="row" style="top:819.54px;height:39.38px;background:#ffe4b5"><div class="c d" style="left:17px;width:66px;line-height:39.08px;height:39.08px">4418821</div><div class="c rt d" style="left:93px;width:48px;line-height:39.08px;height:39.08px">1</div><div class="c " style="left:163px;width:75px;line-height:39.08px;height:39.08px">黄玉</div><div class="c ctr" style="left:238px;width:39px;line-height:39.08px;height:39.08px">女性</div><div class="c d" style="left:292px;width:61px;line-height:39.08px;height:39.08px">44188</div><div class="c rt d" style="left:373px;width:50px;line-height:39.08px;height:39.08px">21</div><div class="c addr" style="left:442px;width:232px;top:3.6px;height:35.48px">清远市连州市星子镇联西村委会水泉村十字巷左二巷4号</div><div class="c rt d" style="left:677px;width:136px;line-height:39.08px;height:39.08px">153/85</div><div class="c " style="left:822px;width:216px;line-height:39.08px;height:39.08px">连州市星子镇中心卫生院</div><div class="c ctr d" style="left:1038px;width:80px;line-height:39.08px;height:39.08px">2018-03-10</div><div class="c ctr d" style="left:1118px;width:119px;line-height:39.08px;height:39.08px">2021-05-07</div><div class="c " style="left:1241px;width:216px;line-height:39.08px;height:39.08px">连州市星子镇中心卫生院</div><div class="c ctr" style="left:1457px;width:118px;line-height:39.08px;height:39.08px">中危</div><div class="c ctr" style="left:1575px;width:117px;line-height:39.08px;height:39.08px"><span class="lk">查看详情</span></div></div>
<div class="rn" style="top:858.62px;height:39.08px;line-height:39.08px">75</div>
<div class="row" style="top:858.62px;height:39.38px;background:#fb8a86"><div class="c d" style="left:17px;width:66px;line-height:39.08px;height:39.08px">44188212</div><div class="c rt d" style="left:93px;width:48px;line-height:39.08px;height:39.08px">2</div><div class="c " style="left:163px;width:75px;line-height:39.08px;height:39.08px">李玉</div><div class="c ctr" style="left:238px;width:39px;line-height:39.08px;height:39.08px">女性</div><div class="c d" style="left:292px;width:61px;line-height:39.08px;height:39.08px">44022</div><div class="c rt d" style="left:373px;width:50px;line-height:39.08px;height:39.08px">9</div><div class="c addr" style="left:442px;width:232px;top:3.6px;height:35.48px">广东省清远市连州市连州镇北山社区电厂宿舍4栋404</div><div class="c rt d" style="left:677px;width:136px;line-height:39.08px;height:39.08px">182/86</div><div class="c " style="left:822px;width:216px;line-height:39.08px;height:39.08px">连州市星子镇中心卫生院</div><div class="c ctr d" style="left:1038px;width:80px;line-height:39.08px;height:39.08px">2021-05-07</div><div class="c ctr d" style="left:1118px;width:119px;line-height:39.08px;height:39.08px">2021-05-07</div><div class="c " style="left:1241px;width:216px;line-height:39.08px;height:39.08px">连州镇北湖社区服务中心</div><div class="c ctr" style="left:1457px;width:118px;line-height:39.08px;height:39.08px">高危</div><div class="c ctr" style="left:1575px;width:117px;line-height:39.08px;height:39.08px"><span class="lk">查看详情</span></div></div>
<div class="abs" style="left:404px;top:312px;width:1px;height:576px;background:rgba(120,140,160,0.10)"></div>
<div class="abs" style="left:484px;top:312px;width:1px;height:576px;background:rgba(120,140,160,0.10)"></div>
<div class="abs" style="left:523px;top:312px;width:1px;height:576px;background:rgba(120,140,160,0.10)"></div>
<div class="abs" style="left:683px;top:312px;width:1px;height:576px;background:rgba(120,140,160,0.10)"></div>
<div class="abs" style="left:923px;top:312px;width:1px;height:576px;background:rgba(120,140,160,0.10)"></div>
<div class="abs" style="left:1063px;top:312px;width:1px;height:576px;background:rgba(120,140,160,0.10)"></div>
<div class="abs" style="left:1284px;top:312px;width:1px;height:576px;background:rgba(120,140,160,0.10)"></div>
<div class="abs" style="left:1364px;top:312px;width:1px;height:576px;background:rgba(120,140,160,0.10)"></div>
<div class="abs" style="left:1483px;top:312px;width:1px;height:576px;background:rgba(120,140,160,0.10)"></div>
<div class="abs" style="left:1703px;top:312px;width:1px;height:576px;background:rgba(120,140,160,0.10)"></div>
<div class="abs" style="left:1821px;top:312px;width:1px;height:576px;background:rgba(120,140,160,0.10)"></div>
<div class="abs" style="left:247px;top:350.08px;width:1692px;height:1px;background:rgba(255,255,255,0.13)"></div>
<div class="abs" style="left:216px;top:350.08px;width:31px;height:1px;background:#eee"></div>
<div class="abs" style="left:247px;top:389.16px;width:1692px;height:1px;background:rgba(255,255,255,0.13)"></div>
<div class="abs" style="left:216px;top:389.16px;width:31px;height:1px;background:#eee"></div>
<div class="abs" style="left:247px;top:428.24px;width:1692px;height:1px;background:rgba(255,255,255,0.13)"></div>
<div class="abs" style="left:216px;top:428.24px;width:31px;height:1px;background:#eee"></div>
<div class="abs" style="left:247px;top:467.32px;width:1692px;height:1px;background:rgba(255,255,255,0.13)"></div>
<div class="abs" style="left:216px;top:467.32px;width:31px;height:1px;background:#eee"></div>
<div class="abs" style="left:247px;top:506.40px;width:1692px;height:1px;background:rgba(255,255,255,0.13)"></div>
<div class="abs" style="left:216px;top:506.40px;width:31px;height:1px;background:#eee"></div>
<div class="abs" style="left:247px;top:545.48px;width:1692px;height:1px;background:rgba(255,255,255,0.13)"></div>
<div class="abs" style="left:216px;top:545.48px;width:31px;height:1px;background:#eee"></div>
<div class="abs" style="left:247px;top:584.56px;width:1692px;height:1px;background:rgba(255,255,255,0.13)"></div>
<div class="abs" style="left:216px;top:584.56px;width:31px;height:1px;background:#eee"></div>
<div class="abs" style="left:247px;top:623.64px;width:1692px;height:1px;background:rgba(255,255,255,0.13)"></div>
<div class="abs" style="left:216px;top:623.64px;width:31px;height:1px;background:#eee"></div>
<div class="abs" style="left:247px;top:662.72px;width:1692px;height:1px;background:rgba(255,255,255,0.13)"></div>
<div class="abs" style="left:216px;top:662.72px;width:31px;height:1px;background:#eee"></div>
<div class="abs" style="left:247px;top:701.80px;width:1692px;height:1px;background:rgba(255,255,255,0.13)"></div>
<div class="abs" style="left:216px;top:701.80px;width:31px;height:1px;background:#eee"></div>
<div class="abs" style="left:247px;top:740.88px;width:1692px;height:1px;background:rgba(255,255,255,0.13)"></div>
<div class="abs" style="left:216px;top:740.88px;width:31px;height:1px;background:#eee"></div>
<div class="abs" style="left:247px;top:779.96px;width:1692px;height:1px;background:rgba(255,255,255,0.13)"></div>
<div class="abs" style="left:216px;top:779.96px;width:31px;height:1px;background:#eee"></div>
<div class="abs" style="left:247px;top:819.04px;width:1692px;height:1px;background:rgba(255,255,255,0.13)"></div>
<div class="abs" style="left:216px;top:819.04px;width:31px;height:1px;background:#eee"></div>
<div class="abs" style="left:247px;top:858.12px;width:1692px;height:1px;background:rgba(255,255,255,0.13)"></div>
<div class="abs" style="left:216px;top:858.12px;width:31px;height:1px;background:#eee"></div>
<div class="abs" style="left:1940px;top:311px;width:18px;height:577px;background:#f2f2f2;border-left:1px solid #fafafa"></div>
<div class="abs" style="left:1941px;top:332px;width:16px;height:478px;border:1px solid #a9a9a9;border-radius:3px;background:linear-gradient(90deg,#f7f7f7,#e4e4e4 50%,#cfcfcf)"></div>
<svg class="abs" style="left:1945px;top:318px" width="9" height="6" viewBox="0 0 9 6"><path d="M0.500 5.500H8.500L4.500 0.800z" fill="#444"/></svg>
<div class="abs" style="left:1958px;top:110px;width:18px;height:778px;background:#f1f1f1"></div>
<div class="abs" style="left:1959.500px;top:130.500px;width:15.500px;height:634px;border:1px solid #a9a9a9;border-radius:3px;background:linear-gradient(90deg,#f7f7f7,#e4e4e4 50%,#cfcfcf)"></div>
<svg class="abs" style="left:1963px;top:117px" width="9" height="6" viewBox="0 0 9 6"><path d="M0.500 5.500H8.500L4.500 0.800z" fill="#444"/></svg>
<svg class="abs" style="left:1963px;top:875px" width="9" height="6" viewBox="0 0 9 6"><path d="M0.500 0.500H8.500L4.500 5.200z" fill="#444"/></svg>
<div class="abs" style="left:1945px;top:566px;width:7px;height:1px;background:#666"></div>
<div class="abs" style="left:1945px;top:569px;width:7px;height:1px;background:#666"></div>
<div class="abs" style="left:1945px;top:572px;width:7px;height:1px;background:#666"></div>
<div class="abs" style="left:1964px;top:444px;width:7px;height:1px;background:#666"></div>
<div class="abs" style="left:1964px;top:447px;width:7px;height:1px;background:#666"></div>
<div class="abs" style="left:1964px;top:450px;width:7px;height:1px;background:#666"></div>
<div class="t" style="left:1122px;top:92px;font-size:50px;font-weight:300;-webkit-text-stroke:0.4px #f20000;color:#f20000">高血压患者健康管理详情</div>
<div class="abs" style="left:0;top:888px;width:1976px;height:5.6px;background:#0b0b30"></div>
<div class="abs" style="left:0;top:893.6px;width:1976px;height:12.4px;background:#fff"></div>
<div class="abs" style="left:0;top:904.500px;width:1976px;height:1.500px;background:#111"></div>
<div class="abs" style="left:316px;top:324.80px;width:64px;height:15.72px;background:rgb(203,190,160)"></div><div class="abs" style="left:316px;top:340.22px;width:64px;height:15.72px;background:rgb(200,222,199)"></div><div class="abs" style="left:316px;top:355.64px;width:64px;height:15.72px;background:rgb(99,194,212)"></div><div class="abs" style="left:316px;top:371.06px;width:64px;height:15.72px;background:rgb(99,194,212)"></div><div class="abs" style="left:316px;top:386.48px;width:64px;height:15.72px;background:rgb(107,211,228)"></div><div class="abs" style="left:316px;top:401.90px;width:64px;height:15.72px;background:rgb(90,177,196)"></div><div class="abs" style="left:316px;top:417.32px;width:64px;height:15.72px;background:rgb(144,215,216)"></div><div class="abs" style="left:316px;top:432.74px;width:64px;height:15.72px;background:rgb(234,212,172)"></div><div class="abs" style="left:316px;top:448.16px;width:64px;height:15.72px;background:rgb(225,206,169)"></div><div class="abs" style="left:316px;top:463.58px;width:64px;height:15.72px;background:rgb(144,215,216)"></div><div class="abs" style="left:316px;top:479.00px;width:64px;height:15.72px;background:rgb(91,178,197)"></div><div class="abs" style="left:316px;top:494.42px;width:64px;height:15.72px;background:rgb(106,210,227)"></div><div class="abs" style="left:316px;top:509.84px;width:64px;height:15.72px;background:rgb(101,200,217)"></div><div class="abs" style="left:316px;top:525.26px;width:64px;height:15.72px;background:rgb(96,188,207)"></div><div class="abs" style="left:316px;top:540.68px;width:64px;height:15.72px;background:rgb(107,211,228)"></div>
<div class="abs" style="left:314px;top:556.10px;width:66.5px;height:15.72px;background:rgb(92,181,200)"></div><div class="abs" style="left:314px;top:571.52px;width:66.5px;height:15.72px;background:rgb(105,207,224)"></div><div class="abs" style="left:314px;top:586.94px;width:66.5px;height:15.72px;background:rgb(103,202,220)"></div><div class="abs" style="left:314px;top:602.36px;width:66.5px;height:15.72px;background:rgb(94,185,204)"></div><div class="abs" style="left:314px;top:617.78px;width:66.5px;height:15.72px;background:rgb(107,211,228)"></div><div class="abs" style="left:314px;top:633.20px;width:66.5px;height:15.72px;background:rgb(94,184,202)"></div><div class="abs" style="left:314px;top:648.62px;width:66.5px;height:15.72px;background:rgb(104,204,222)"></div><div class="abs" style="left:314px;top:664.04px;width:66.5px;height:15.72px;background:rgb(104,205,223)"></div><div class="abs" style="left:314px;top:679.46px;width:66.5px;height:15.72px;background:rgb(93,183,201)"></div><div class="abs" style="left:314px;top:694.88px;width:66.5px;height:15.72px;background:rgb(107,211,228)"></div><div class="abs" style="left:314px;top:710.30px;width:66.5px;height:15.72px;background:rgb(95,186,205)"></div><div class="abs" style="left:314px;top:725.72px;width:66.5px;height:15.72px;background:rgb(102,201,219)"></div><div class="abs" style="left:314px;top:741.14px;width:66.5px;height:15.72px;background:rgb(106,208,225)"></div><div class="abs" style="left:314px;top:756.56px;width:66.5px;height:15.72px;background:rgb(92,180,199)"></div><div class="abs" style="left:314px;top:771.98px;width:66.5px;height:15.72px;background:rgb(107,211,228)"></div><div class="abs" style="left:314px;top:787.40px;width:66.5px;height:15.72px;background:rgb(96,189,207)"></div><div class="abs" style="left:314px;top:802.82px;width:66.5px;height:15.72px;background:rgb(101,199,216)"></div><div class="abs" style="left:314px;top:818.24px;width:66.5px;height:0.30px;background:rgb(107,211,228)"></div>
<div class="abs" style="left:313px;top:818.24px;width:71.5px;height:15.72px;background:rgb(236,226,187)"></div><div class="abs" style="left:313px;top:833.66px;width:71.5px;height:15.72px;background:rgb(204,190,160)"></div><div class="abs" style="left:313px;top:849.08px;width:71.5px;height:15.72px;background:rgb(254,194,163)"></div><div class="abs" style="left:313px;top:864.50px;width:71.5px;height:15.72px;background:rgb(223,129,128)"></div><div class="abs" style="left:313px;top:879.92px;width:71.5px;height:13.98px;background:rgb(146,88,101)"></div>
<div class="abs" style="left:427.5px;top:324.80px;width:19.5px;height:15.72px;background:rgb(200,187,158)"></div><div class="abs" style="left:427.5px;top:340.22px;width:19.5px;height:15.72px;background:rgb(200,222,199)"></div><div class="abs" style="left:427.5px;top:355.64px;width:19.5px;height:15.72px;background:rgb(98,193,211)"></div><div class="abs" style="left:427.5px;top:371.06px;width:19.5px;height:15.72px;background:rgb(98,192,211)"></div><div class="abs" style="left:427.5px;top:386.48px;width:19.5px;height:15.72px;background:rgb(107,211,228)"></div><div class="abs" style="left:427.5px;top:401.90px;width:19.5px;height:15.72px;background:rgb(89,174,194)"></div><div class="abs" style="left:427.5px;top:417.32px;width:19.5px;height:15.72px;background:rgb(144,215,216)"></div><div class="abs" style="left:427.5px;top:432.74px;width:19.5px;height:15.72px;background:rgb(232,211,172)"></div><div class="abs" style="left:427.5px;top:448.16px;width:19.5px;height:15.72px;background:rgb(223,204,168)"></div><div class="abs" style="left:427.5px;top:463.58px;width:19.5px;height:15.72px;background:rgb(144,215,216)"></div><div class="abs" style="left:427.5px;top:479.00px;width:19.5px;height:15.72px;background:rgb(90,176,195)"></div><div class="abs" style="left:427.5px;top:494.42px;width:19.5px;height:15.72px;background:rgb(106,210,227)"></div><div class="abs" style="left:427.5px;top:509.84px;width:19.5px;height:15.72px;background:rgb(101,199,217)"></div><div class="abs" style="left:427.5px;top:525.26px;width:19.5px;height:15.72px;background:rgb(95,187,205)"></div><div class="abs" style="left:427.5px;top:540.68px;width:19.5px;height:15.72px;background:rgb(107,211,228)"></div>
<div class="abs" style="left:425.5px;top:556.10px;width:22.5px;height:15.72px;background:rgb(91,179,198)"></div><div class="abs" style="left:425.5px;top:571.52px;width:22.5px;height:15.72px;background:rgb(105,207,224)"></div><div class="abs" style="left:425.5px;top:586.94px;width:22.5px;height:15.72px;background:rgb(102,202,219)"></div><div class="abs" style="left:425.5px;top:602.36px;width:22.5px;height:15.72px;background:rgb(94,184,202)"></div><div class="abs" style="left:425.5px;top:617.78px;width:22.5px;height:15.72px;background:rgb(107,211,228)"></div><div class="abs" style="left:425.5px;top:633.20px;width:22.5px;height:15.72px;background:rgb(93,182,200)"></div><div class="abs" style="left:425.5px;top:648.62px;width:22.5px;height:15.72px;background:rgb(103,204,221)"></div><div class="abs" style="left:425.5px;top:664.04px;width:22.5px;height:15.72px;background:rgb(104,205,222)"></div><div class="abs" style="left:425.5px;top:679.46px;width:22.5px;height:15.72px;background:rgb(92,181,199)"></div><div class="abs" style="left:425.5px;top:694.88px;width:22.5px;height:15.72px;background:rgb(107,211,228)"></div><div class="abs" style="left:425.5px;top:710.30px;width:22.5px;height:15.72px;background:rgb(94,185,203)"></div><div class="abs" style="left:425.5px;top:725.72px;width:22.5px;height:15.72px;background:rgb(102,201,218)"></div><div class="abs" style="left:425.5px;top:741.14px;width:22.5px;height:15.72px;background:rgb(105,208,225)"></div><div class="abs" style="left:425.5px;top:756.56px;width:22.5px;height:15.72px;background:rgb(91,178,197)"></div><div class="abs" style="left:425.5px;top:771.98px;width:22.5px;height:15.72px;background:rgb(107,211,228)"></div><div class="abs" style="left:425.5px;top:787.40px;width:22.5px;height:15.72px;background:rgb(96,188,206)"></div><div class="abs" style="left:425.5px;top:802.82px;width:22.5px;height:15.72px;background:rgb(101,198,216)"></div><div class="abs" style="left:425.5px;top:818.24px;width:22.5px;height:15.72px;background:rgb(236,226,187)"></div><div class="abs" style="left:425.5px;top:833.66px;width:22.5px;height:15.72px;background:rgb(200,187,159)"></div><div class="abs" style="left:425.5px;top:849.08px;width:22.5px;height:15.72px;background:rgb(254,194,163)"></div><div class="abs" style="left:425.5px;top:864.50px;width:22.5px;height:15.72px;background:rgb(221,128,128)"></div><div class="abs" style="left:425.5px;top:879.92px;width:22.5px;height:13.98px;background:rgb(145,87,101)"></div>
<div class="abs" style="left:570px;top:324.80px;width:97px;height:15.72px;background:rgb(211,195,163)"></div><div class="abs" style="left:570px;top:340.22px;width:97px;height:15.72px;background:rgb(200,222,199)"></div><div class="abs" style="left:570px;top:355.64px;width:97px;height:15.72px;background:rgb(100,196,214)"></div><div class="abs" style="left:570px;top:371.06px;width:97px;height:15.72px;background:rgb(100,196,214)"></div><div class="abs" style="left:570px;top:386.48px;width:97px;height:15.72px;background:rgb(107,211,228)"></div><div class="abs" style="left:570px;top:401.90px;width:97px;height:15.72px;background:rgb(93,182,200)"></div><div class="abs" style="left:570px;top:417.32px;width:97px;height:15.72px;background:rgb(144,215,216)"></div>
<div class="abs" style="left:568.5px;top:432.74px;width:92.5px;height:15.72px;background:rgb(237,214,174)"></div><div class="abs" style="left:568.5px;top:448.16px;width:92.5px;height:15.72px;background:rgb(229,209,170)"></div><div class="abs" style="left:568.5px;top:463.58px;width:92.5px;height:15.72px;background:rgb(144,215,216)"></div><div class="abs" style="left:568.5px;top:479.00px;width:92.5px;height:15.72px;background:rgb(93,183,201)"></div><div class="abs" style="left:568.5px;top:494.42px;width:92.5px;height:15.72px;background:rgb(107,210,227)"></div><div class="abs" style="left:568.5px;top:509.84px;width:92.5px;height:15.72px;background:rgb(102,201,219)"></div><div class="abs" style="left:568.5px;top:525.26px;width:92.5px;height:15.72px;background:rgb(97,191,210)"></div><div class="abs" style="left:568.5px;top:540.68px;width:92.5px;height:15.72px;background:rgb(107,211,228)"></div>
<div class="abs" style="left:566px;top:556.10px;width:94px;height:15.72px;background:rgb(94,185,204)"></div><div class="abs" style="left:566px;top:571.52px;width:94px;height:15.72px;background:rgb(105,208,225)"></div><div class="abs" style="left:566px;top:586.94px;width:94px;height:15.72px;background:rgb(103,204,221)"></div><div class="abs" style="left:566px;top:602.36px;width:94px;height:15.72px;background:rgb(96,189,207)"></div><div class="abs" style="left:566px;top:617.78px;width:94px;height:15.72px;background:rgb(107,211,228)"></div><div class="abs" style="left:566px;top:633.20px;width:94px;height:15.72px;background:rgb(95,187,206)"></div><div class="abs" style="left:566px;top:648.62px;width:94px;height:15.72px;background:rgb(104,205,223)"></div><div class="abs" style="left:566px;top:664.04px;width:94px;height:15.72px;background:rgb(105,206,223)"></div><div class="abs" style="left:566px;top:679.46px;width:94px;height:15.72px;background:rgb(95,187,205)"></div><div class="abs" style="left:566px;top:694.88px;width:94px;height:15.72px;background:rgb(107,211,228)"></div><div class="abs" style="left:566px;top:710.30px;width:94px;height:15.72px;background:rgb(97,190,208)"></div><div class="abs" style="left:566px;top:725.72px;width:94px;height:15.72px;background:rgb(103,203,220)"></div><div class="abs" style="left:566px;top:741.14px;width:94px;height:15.72px;background:rgb(106,208,226)"></div><div class="abs" style="left:566px;top:756.56px;width:94px;height:15.72px;background:rgb(94,184,203)"></div><div class="abs" style="left:566px;top:771.98px;width:94px;height:15.72px;background:rgb(107,211,228)"></div><div class="abs" style="left:566px;top:787.40px;width:94px;height:15.72px;background:rgb(98,192,210)"></div><div class="abs" style="left:566px;top:802.82px;width:94px;height:15.72px;background:rgb(102,200,218)"></div><div class="abs" style="left:566px;top:818.24px;width:94px;height:0.30px;background:rgb(107,211,228)"></div>
<div class="abs" style="left:571px;top:818.24px;width:89px;height:15.72px;background:rgb(236,226,187)"></div><div class="abs" style="left:571px;top:833.66px;width:89px;height:15.72px;background:rgb(211,195,163)"></div><div class="abs" style="left:571px;top:849.08px;width:89px;height:15.72px;background:rgb(254,194,163)"></div><div class="abs" style="left:571px;top:864.50px;width:89px;height:15.72px;background:rgb(227,130,129)"></div><div class="abs" style="left:571px;top:879.92px;width:89px;height:13.98px;background:rgb(148,88,101)"></div>
</body></html>
